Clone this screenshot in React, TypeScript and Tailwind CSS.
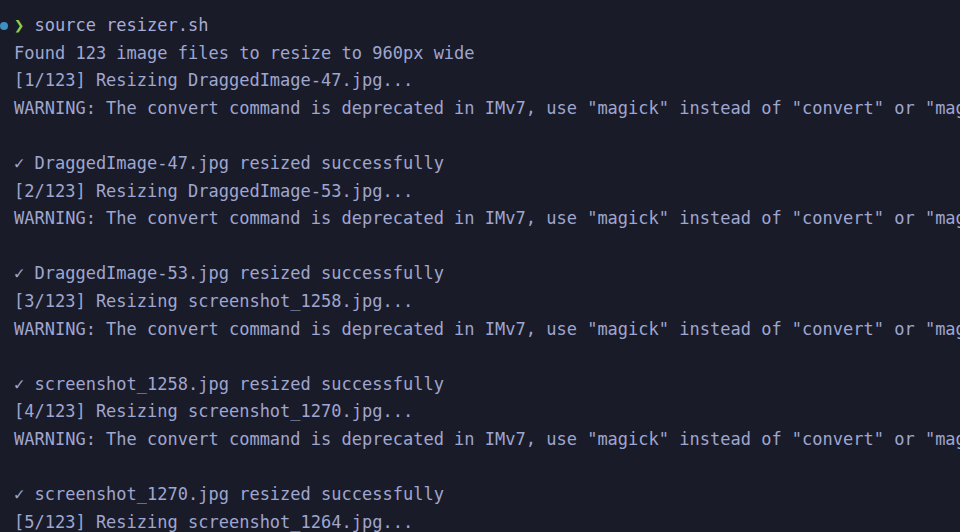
const lines: string[] = [
  "Found 123 image files to resize to 960px wide",
  "[1/123] Resizing DraggedImage-47.jpg...",
  'WARNING: The convert command is deprecated in IMv7, use "magick" instead of "convert" or "magick convert"',
  "",
  "✓ DraggedImage-47.jpg resized successfully",
  "[2/123] Resizing DraggedImage-53.jpg...",
  'WARNING: The convert command is deprecated in IMv7, use "magick" instead of "convert" or "magick convert"',
  "",
  "✓ DraggedImage-53.jpg resized successfully",
  "[3/123] Resizing screenshot_1258.jpg...",
  'WARNING: The convert command is deprecated in IMv7, use "magick" instead of "convert" or "magick convert"',
  "",
  "✓ screenshot_1258.jpg resized successfully",
  "[4/123] Resizing screenshot_1270.jpg...",
  'WARNING: The convert command is deprecated in IMv7, use "magick" instead of "convert" or "magick convert"',
  "",
  "✓ screenshot_1270.jpg resized successfully",
  "[5/123] Resizing screenshot_1264.jpg...",
];

export default function App() {
  return (
    <div className="w-[960px] h-[532px] overflow-hidden bg-[#1a1b29] pt-[12px] font-['DejaVu_Sans_Mono',monospace] text-[17px] leading-[27.6px] text-[#9fa6cf]">
      <div className="relative flex whitespace-pre pl-[14px]">
        <span className="absolute left-0 top-[10px] h-[8px] w-[8px] rounded-full bg-[#3d8fc4]" />
        <span className="font-bold text-[#8fd04a]">❯</span>
        <span className="text-[#a6add6]"> source resizer.sh</span>
      </div>
      {lines.map((l, i) => (
        <div key={i} className="whitespace-pre pl-[14px] h-[27.6px]">
          {l}
        </div>
      ))}
    </div>
  );
}
